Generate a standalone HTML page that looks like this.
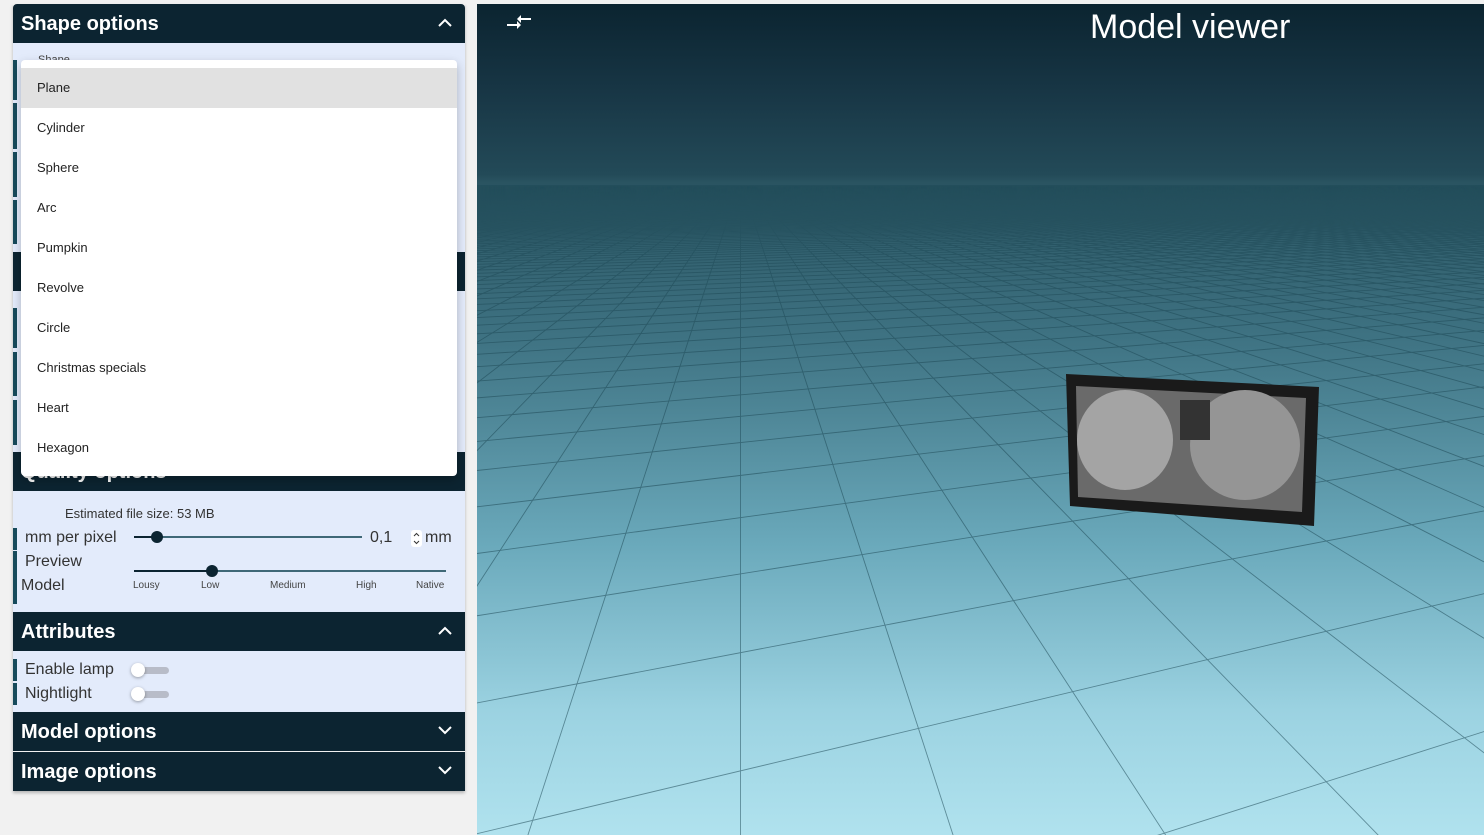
<!DOCTYPE html>
<html style="overflow:hidden"><head><style>
body{margin:0;width:1484px;height:835px;background:#f1f1f1;font-family:"Liberation Sans",sans-serif;position:relative;overflow:hidden}
.abs{position:absolute}
.hdr{position:absolute;left:13px;width:452px;height:39px;background:#0c2431;color:#fff;font-weight:bold;font-size:20px;box-sizing:border-box;padding-left:8px;line-height:40px}
.hdr svg{position:absolute;right:13px;top:14px}
.body{position:absolute;left:13px;width:452px;background:#e3ebfb}
.bar{position:absolute;left:13px;width:4px;background:#164a5b}
.lbl{position:absolute;font-size:16px;color:#333}
.item{position:absolute;left:21px;width:436px;height:40px;line-height:40px;font-size:13px;color:#222;padding-left:16px;box-sizing:border-box}
.tick{position:absolute;font-size:10px;color:#444}
</style></head><body>
<div class="abs" style="left:477px;top:4px;width:1007px;height:831px;overflow:hidden;background:linear-gradient(#0b2430 0%,#173544 10%,#234a58 20.5%,#2a5461 21.5%,#3e7282 40%,#6aa9bb 65%,#9bd2e1 85%,#b0e2ee 100%)">
<svg id="grid" style="position:absolute;left:0;top:0;overflow:hidden" width="1007" height="831" viewBox="0 0 1007 831"></svg>
</div>
<svg class="abs" style="left:0;top:0" width="1484" height="835">
<polygon points="1066,374 1319,387 1314,526 1070,506" fill="#1a1a1a"/>
<polygon points="1076,386 1306,398 1302,512 1078,497" fill="#6a6a6a"/>
<ellipse cx="1125" cy="440" rx="48" ry="50" fill="#a4a4a4"/>
<ellipse cx="1245" cy="445" rx="55" ry="55" fill="#959595"/>
<rect x="1180" y="400" width="30" height="40" fill="#333"/>
<g fill="#fff"><rect x="507" y="24" width="10" height="2"/><polygon points="517,21 521,25 517,29"/><rect x="521" y="18" width="10" height="2"/><polygon points="521,15 517,19 521,23"/></g>
</svg>
<div class="abs" style="left:1090px;top:8px;font-size:34px;color:#fff">Model viewer</div>
<script>
(function(){
var g=document.getElementById('grid'),cx=480,yh=176,f=700,h=1,s=0.31,th=0.3,sn=Math.sin(th),cs=Math.cos(th),zmin=0.3,zmax=120,out='';
function P(X,Z){return [(cx+f*X/Z).toFixed(1),(yh+f*h/Z).toFixed(1)];}
for(var i=-900;i<=900;i++){var c=i*s;
 var v1=(zmin-c*sn)/cs,v2=(zmax-c*sn)/cs;
 var a=P(c*cs-v1*sn,zmin),b=P(c*cs-v2*sn,zmax);
 out+='<line x1="'+a[0]+'" y1="'+a[1]+'" x2="'+b[0]+'" y2="'+b[1]+'"/>';
 var u1=(zmin-c*cs)/sn,u2=(zmax-c*cs)/sn;
 a=P(u1*cs-c*sn,zmin);b=P(u2*cs-c*sn,zmax);
 out+='<line x1="'+a[0]+'" y1="'+a[1]+'" x2="'+b[0]+'" y2="'+b[1]+'"/>';
}
g.innerHTML='<g stroke="#1f4a57" stroke-width="0.9" opacity="0.55">'+out+'</g>';
})();
</script>

<div class="abs" style="left:13px;top:4px;width:452px;height:787px;box-shadow:0 2px 3px rgba(0,0,0,.25)"></div>
<div class="hdr" style="top:4px;border-radius:4px 4px 0 0">Shape options<svg width="14" height="9"><path d="M1 8 L7 2 L13 8" stroke="#fff" stroke-width="2" fill="none"/></svg></div>
<div class="body" style="top:43px;height:209px"></div>
<div class="hdr" style="top:252px"></div>
<div class="body" style="top:291px;height:161px"></div>
<div class="bar" style="top:60px;height:40px"></div><div class="bar" style="top:103px;height:46px"></div><div class="bar" style="top:152px;height:45px"></div><div class="bar" style="top:200px;height:44px"></div>
<div class="bar" style="top:308px;height:40px"></div><div class="bar" style="top:352px;height:44px"></div><div class="bar" style="top:400px;height:45px"></div>
<div class="abs" style="left:38px;top:54px;font-size:11px;color:#444">Shape</div>
<div class="hdr" style="top:452px">Quality options</div>
<div class="abs" style="left:21px;top:60px;width:436px;height:416px;background:#fff;border-radius:4px;box-shadow:0 4px 10px rgba(0,0,0,.25)"></div>
<div class="item" style="top:68px;background:#e1e1e1">Plane</div>
<div class="item" style="top:108px">Cylinder</div>
<div class="item" style="top:148px">Sphere</div>
<div class="item" style="top:188px">Arc</div>
<div class="item" style="top:228px">Pumpkin</div>
<div class="item" style="top:268px">Revolve</div>
<div class="item" style="top:308px">Circle</div>
<div class="item" style="top:348px">Christmas specials</div>
<div class="item" style="top:388px">Heart</div>
<div class="item" style="top:428px">Hexagon</div>

<div class="body" style="top:491px;height:121px"></div>
<div class="abs" style="left:65px;top:506px;font-size:13px;color:#333">Estimated file size: 53 MB</div>
<div class="bar" style="top:528px;height:22px"></div><div class="bar" style="top:551px;height:53px"></div>
<div class="lbl" style="left:25px;top:529px">mm per pixel</div>
<div class="lbl" style="left:25px;top:553px">Preview</div>
<div class="lbl" style="left:21px;top:577px">Model</div>
<div class="abs" style="left:134px;top:536px;width:228px;height:2px;background:#3f6877"></div>
<div class="abs" style="left:134px;top:536px;width:22px;height:2px;background:#0c2431"></div>
<div class="abs" style="left:151px;top:531px;width:12px;height:12px;border-radius:50%;background:#0c2431"></div>
<div class="lbl" style="left:370px;top:529px">0,1</div>
<svg class="abs" style="left:411px;top:530px" width="11" height="17"><rect width="11" height="17" rx="3" fill="#fff"/><path d="M3 6 L5.5 3.5 L8 6 M3 11 L5.5 13.5 L8 11" stroke="#333" fill="none"/></svg>
<div class="lbl" style="left:425px;top:529px">mm</div>
<div class="abs" style="left:134px;top:570px;width:312px;height:2px;background:#3f6877"></div>
<div class="abs" style="left:134px;top:570px;width:78px;height:2px;background:#0c2431"></div>
<div class="abs" style="left:206px;top:565px;width:12px;height:12px;border-radius:50%;background:#0c2431"></div>
<div class="tick" style="left:133px;top:580px">Lousy</div><div class="tick" style="left:201px;top:580px">Low</div><div class="tick" style="left:270px;top:580px">Medium</div><div class="tick" style="left:356px;top:580px">High</div><div class="tick" style="left:416px;top:580px">Native</div>

<div class="hdr" style="top:612px">Attributes<svg width="14" height="9"><path d="M1 8 L7 2 L13 8" stroke="#fff" stroke-width="2" fill="none"/></svg></div>
<div class="body" style="top:651px;height:61px"></div>
<div class="bar" style="top:659px;height:22px"></div><div class="bar" style="top:683px;height:22px"></div>
<div class="lbl" style="left:25px;top:661px">Enable lamp</div>
<div class="lbl" style="left:25px;top:685px">Nightlight</div>
<div class="abs" style="left:134px;top:667px;width:35px;height:7px;border-radius:4px;background:#b8bcc8"></div>
<div class="abs" style="left:131px;top:663px;width:14px;height:14px;border-radius:50%;background:#fff;box-shadow:0 1px 3px rgba(0,0,0,.35)"></div>
<div class="abs" style="left:134px;top:691px;width:35px;height:7px;border-radius:4px;background:#b8bcc8"></div>
<div class="abs" style="left:131px;top:687px;width:14px;height:14px;border-radius:50%;background:#fff;box-shadow:0 1px 3px rgba(0,0,0,.35)"></div>

<div class="hdr" style="top:712px">Model options<svg width="14" height="9"><path d="M1 1 L7 7 L13 1" stroke="#fff" stroke-width="2" fill="none"/></svg></div>
<div class="hdr" style="top:752px">Image options<svg width="14" height="9"><path d="M1 1 L7 7 L13 1" stroke="#fff" stroke-width="2" fill="none"/></svg></div>
</body></html>
